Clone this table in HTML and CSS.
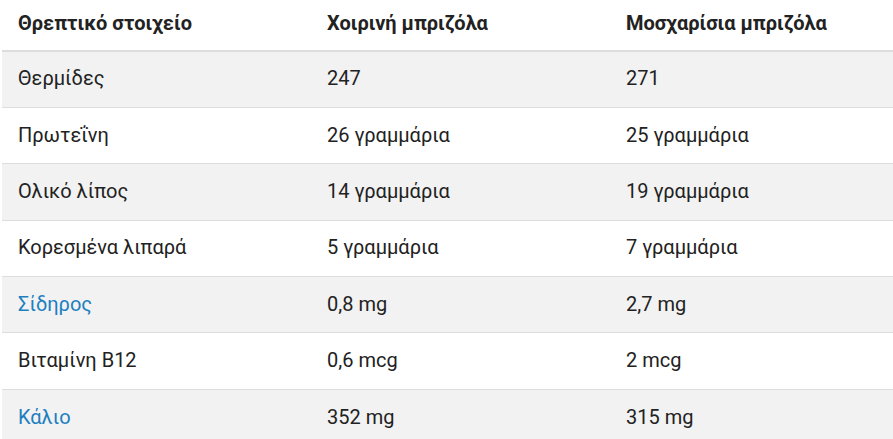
FILE: index.html
```html
<!DOCTYPE html>
<html lang="el">
<head>
<meta charset="utf-8">
<link rel="stylesheet" href="styles.css">
</head>
<body>
<div class="wrap">
<table class="nutri">
<colgroup><col class="c1"><col class="c2"><col class="c3"></colgroup>
<thead>
<tr><th>Θρεπτικό στοιχείο</th><th>Χοιρινή μπριζόλα</th><th>Μοσχαρίσια μπριζόλα</th></tr>
</thead>
<tbody>
<tr><td>Θερμίδες</td><td>247</td><td>271</td></tr>
<tr><td>Πρωτεΐνη</td><td>26 γραμμάρια</td><td>25 γραμμάρια</td></tr>
<tr><td>Ολικό λίπος</td><td>14 γραμμάρια</td><td>19 γραμμάρια</td></tr>
<tr><td>Κορεσμένα λιπαρά</td><td>5 γραμμάρια</td><td>7 γραμμάρια</td></tr>
<tr><td><a class="link" href="#">Σίδηρος</a></td><td>0,8 mg</td><td>2,7 mg</td></tr>
<tr><td>Βιταμίνη B12</td><td>0,6 mcg</td><td>2 mcg</td></tr>
<tr><td><a class="link" href="#">Κάλιο</a></td><td>352 mg</td><td>315 mg</td></tr>
</tbody>
</table>
</div>
</body>
</html>
```
FILE: styles.css
```css
html, body { margin: 0; padding: 0; background: #fff; }
.wrap { padding-left: 2px; margin-top: -5px; overflow: hidden; }
.nutri {
  width: 895px;
  border-collapse: collapse;
  font-family: Roboto, "Noto Sans", sans-serif;
  font-size: 20px;
  color: #222;
  table-layout: fixed;
}
.c1 { width: 309px; }
.c2 { width: 299px; }
.c3 { width: 287px; }
.nutri th {
  text-align: left;
  font-weight: 700;
  height: 56px;
  padding: 0 16px;
  box-sizing: border-box;
  border-bottom: 2px solid #ddd;
  vertical-align: middle;
}
.nutri td {
  height: 56.4px;
  padding: 0 16px 2px;
  box-sizing: border-box;
  border-bottom: 1px solid #ddd;
  vertical-align: middle;
}
.nutri tbody tr:nth-child(odd) td { background: #f2f2f2; }
.link { color: #1d7fc0; text-decoration: none; }
```
